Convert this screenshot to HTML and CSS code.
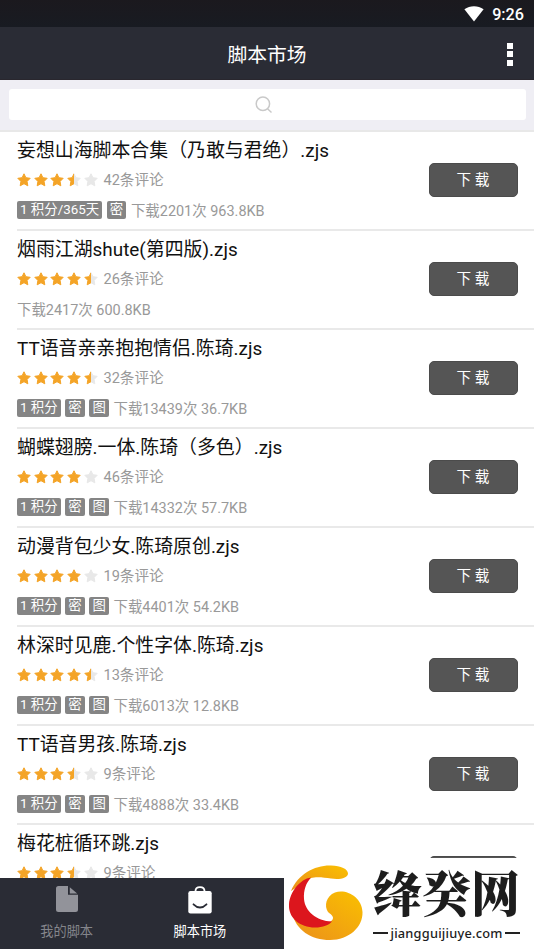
FILE: index.html
```html
<!DOCTYPE html>
<html lang="zh-CN">
<head>
<meta charset="utf-8">
<title>脚本市场</title>
<link rel="stylesheet" href="styles.css">
</head>
<body>
<svg class="defs" width="0" height="0" aria-hidden="true">
  <defs>
    <linearGradient id="half"><stop offset=".54" stop-color="#f4a427"/><stop offset=".54" stop-color="#e8e8e8"/></linearGradient>
    <path id="star" d="M7 .8 8.9 4.7 13.2 5.3 10.1 8.4 10.8 12.8 7 10.7 3.2 12.8 3.9 8.4 .8 5.3 5.1 4.7Z" stroke-linejoin="round"/>
  </defs>
</svg>
<div class="app">
  <div class="status">
    <svg class="wifi" viewBox="0 0 20 16"><path d="M.4 3.2C6-.8 14-.8 19.6 3.2L10 15.6Z"/></svg>
    <span>9:26</span>
  </div>
  <header class="header">
    <h1>脚本市场</h1>
    <div class="more"><i></i><i></i><i></i></div>
  </header>
  <div class="search"><div class="field">
    <svg viewBox="0 0 18 18"><circle cx="7.9" cy="7.8" r="6.7"/><path d="M12.5 12.7 16.500 16.500"/></svg>
  </div></div>
  <main class="list" id="list"></main>
  <nav class="tabs">
    <div class="tab">
      <svg viewBox="0 0 22 26"><path d="M2.5 0H12V8.8H22V23.5Q22 26 19.5 26H2.5Q0 26 0 23.5V2.5Q0 0 2.5 0ZM13.8 1.2 21.2 7.6H13.8Z"/></svg>
      <span>我的脚本</span>
    </div>
    <div class="tab active">
      <svg class="bag" viewBox="0 0 24 28"><path class="handle" d="M7.5 6V5Q7.5 1.2 12 1.2T16.5 5V6"/><rect x=".3" y="5" width="23.4" height="22.5" rx="2.2"/><path class="smile" d="M5.5 18.3Q12 24.8 18.5 18.3"/></svg>
      <span>脚本市场</span>
    </div>
  </nav>
  <div class="brand">
    <svg viewBox="0 0 76 78">
      <defs><linearGradient id="gold" x1="0" y1="1" x2="1" y2="0"><stop offset="0" stop-color="#eb8f1c"/><stop offset="1" stop-color="#fac000"/></linearGradient></defs>
      <path fill="url(#gold)" d="M3 27C10 10 27 1 43 1.500C53 2 60 5 60 9.500C60 14 52 16 43 14.600C36 13.300 28 12.500 23 14Z"/>
      <path fill="url(#gold)" d="M4 49C12 62 28 67 42 58C48 54 44 51 40 48C36 42 38 32 47 28.500C58 24.500 74 33 74.500 48C75 63 61 76 42 76C23 76 8 66 4 49Z"/>
      <path fill="#dc161d" d="M23 13.500C12 15 2 28 1 40C0 54 12 63.500 27 63.500C35 63.500 41 61 44 57.500C28 57 17 47 16 35C15.500 26 18 19 23 13.500Z"/>
    </svg>
    <div class="wordmark"><b>绛癸网</b><div class="domain"><span>jiangguijiuye.com</span></div></div>
  </div>
</div>
<script src="list.js"></script>
</body>
</html>
```
FILE: list.js
```js
const items = [
  ["妄想山海脚本合集（乃敢与君绝）.zjs", 3.5, 42, ["1 积分/365天", "密"], "下载2201次 963.8KB"],
  ["烟雨江湖shute(第四版).zjs", 4.5, 26, [], "下载2417次 600.8KB"],
  ["TT语音亲亲抱抱情侣.陈琦.zjs", 4.5, 32, ["1 积分", "密", "图"], "下载13439次 36.7KB"],
  ["蝴蝶翅膀.一体.陈琦（多色）.zjs", 4, 46, ["1 积分", "密", "图"], "下载14332次 57.7KB"],
  ["动漫背包少女.陈琦原创.zjs", 4, 19, ["1 积分", "密", "图"], "下载4401次 54.2KB"],
  ["林深时见鹿.个性字体.陈琦.zjs", 4.5, 13, ["1 积分", "密", "图"], "下载6013次 12.8KB"],
  ["TT语音男孩.陈琦.zjs", 3.5, 9, ["1 积分", "密", "图"], "下载4888次 33.4KB"],
  ["梅花桩循环跳.zjs", 3.5, 9, [], ""]
];
const star = (score, i) => {
  const fill = score >= i + 1 ? "full" : score > i ? "half" : "empty";
  return `<svg class="star ${fill}" viewBox="0 0 14 14"><use href="#star"/></svg>`;
};
document.getElementById("list").innerHTML = items.map(([name, score, count, tags, info]) => `
  <article class="item">
    <div class="details">
      <h2>${name}</h2>
      <div class="rating">${[0, 1, 2, 3, 4].map(i => star(score, i)).join("")}<span>${count}条评论</span></div>
      <div class="meta">${tags.map(t => `<em>${t}</em>`).join("")}<span>${info}</span></div>
    </div>
    <button class="download">${info ? "下 载" : ""}</button>
  </article>`).join("");
```
FILE: styles.css
```css
* { box-sizing: border-box; }
body { margin: 0; background: #fff; font-family: Roboto, "Noto Sans CJK SC", sans-serif; }
.defs { display: block; }
.app { position: relative; width: 534px; height: 949px; overflow: hidden; display: flex; flex-direction: column; }
.status { height: 27px; flex: none; background: linear-gradient(#1b191e, #181b22); color: #fff; display: flex; align-items: center; justify-content: flex-end; padding: 2px 10px 0 0; gap: 8px; font-size: 16.200px; font-weight: 500; line-height: 25px; }
.wifi { width: 20px; height: 16px; margin-top: -2px; fill: #fff; }
.header { height: 53px; flex: none; background: #2a2c35; display: grid; grid-template-columns: 1fr auto 1fr; align-items: center; border-bottom: 1px solid #29272e; }
.header h1 { grid-column: 2; margin: 5px 0 0; color: #fff; font-size: 19.800px; font-weight: 400; line-height: 28px; }
.more { justify-self: end; display: flex; flex-direction: column; gap: 2.500px; margin: 2px 21px 0 0; }
.more i { width: 6px; height: 6px; background: #fff; }
.search { height: 52px; flex: none; background: #efeef4; border-bottom: 2px solid #e8e8e8; padding: 9px 8.500px 0; }
.field { height: 31px; border-radius: 3px; background: #fff; display: flex; align-items: center; justify-content: center; padding-right: 6px; }
.field svg { width: 18px; height: 18px; fill: none; stroke: #c9c9c9; stroke-width: 1.500; }
.list { flex: 1; min-height: 0; overflow: hidden; }
.item { height: 98.950px; margin-left: 17px; padding-right: 16.500px; border-bottom: 2px solid #e9e9e9; display: flex; align-items: center; justify-content: space-between; }
.details { height: 97px; display: flex; flex-direction: column; }
h2 { margin: 5px 0 0; height: 28px; line-height: 27px; font-size: 18.900px; font-weight: 400; color: #111; white-space: nowrap; }
.rating { height: 30px; display: flex; align-items: center; gap: 2.700px; font-size: 14.600px; color: #999; }
.rating span { margin: -2px 0 0 3px; }
.star { width: 14px; height: 14px; overflow: visible; }
.full { fill: #f4a427; stroke: #f4a427; }
.half { fill: url(#half); stroke: url(#half); }
.empty { fill: #e8e8e8; stroke: #e8e8e8; }
.meta { height: 31px; display: flex; align-items: center; gap: 4.700px; font-size: 14.450px; color: #999; white-space: nowrap; }
.meta span { margin-top: -2px; }
.meta em { height: 18px; line-height: 17px; padding: 0 3px; border-radius: 2px; background: #858585; color: #fff; font-size: 13.400px; font-style: normal; }
.download { width: 89px; height: 34px; margin: 0; padding: 0 0 3px; border: 1px solid #4b4b4b; border-radius: 5px; background: #555; color: #fff; font: 14.600px Roboto, "Noto Sans CJK SC", sans-serif; }
.tabs { height: 71px; flex: none; background: #2a2c35; display: grid; grid-template-columns: repeat(4, 133.300px); }
.tab { display: flex; flex-direction: column; align-items: center; padding-top: 8px; color: #84858b; font-size: 13.200px; line-height: 20px; }
.tab svg { width: 22px; height: 26px; fill: #92939a; margin-bottom: 10px; }
.tab .bag { width: 24px; height: 28px; margin-bottom: 8px; fill: #fff; }
.tab .handle, .tab .smile { fill: none; stroke-width: 1.800; stroke: #fff; stroke-linecap: round; }
.tab .smile { stroke: #2a2c35; }
.tab.active { color: #fff; }
.brand { position: absolute; left: 284px; top: 858px; width: 250px; height: 91px; background: #fff; display: flex; padding: 6px 0 0 4px; }
.brand > svg { width: 76px; height: 78px; flex: none; }
.wordmark { margin-left: 9px; width: 147px; color: #1d1d1d; }
.wordmark b { display: block; height: 58px; font: 900 49px/54px "Noto Serif CJK SC", "Noto Sans CJK SC", serif; white-space: nowrap; }
.domain { display: flex; align-items: center; gap: 2px; height: 22px; font: 500 12.800px/20px "Noto Sans", sans-serif; }
.domain::before, .domain::after { content: ""; flex: 1; height: 2px; background: #222; }
.domain span { letter-spacing: .22px; }
```
